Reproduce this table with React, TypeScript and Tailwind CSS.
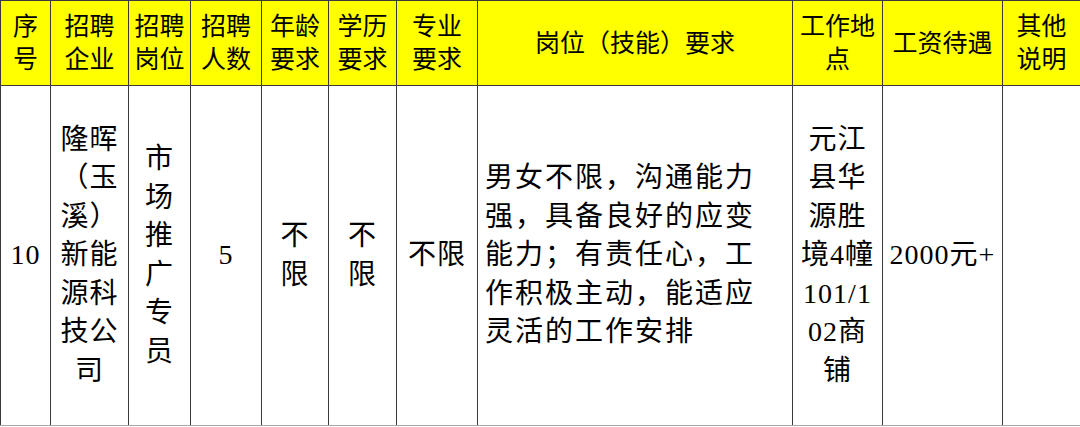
const font = {
  fontFamily: '"Liberation Serif", "Noto Sans CJK SC", serif',
};

const cols = [50, 78, 62, 71, 67, 68, 81, 315, 90, 120, 78];

const headers: string[][] = [
  ["序", "号"],
  ["招聘", "企业"],
  ["招聘", "岗位"],
  ["招聘", "人数"],
  ["年龄", "要求"],
  ["学历", "要求"],
  ["专业", "要求"],
  ["岗位（技能）要求"],
  ["工作地", "点"],
  ["工资待遇"],
  ["其他", "说明"],
];

const row: { lines: string[]; align?: "left" }[] = [
  { lines: ["10"] },
  { lines: ["隆晖", "（玉", "溪）", "新能", "源科", "技公", "司"] },
  { lines: ["市", "场", "推", "广", "专", "员"] },
  { lines: ["5"] },
  { lines: ["不", "限"] },
  { lines: ["不", "限"] },
  { lines: ["不限"] },
  {
    lines: [
      "男女不限，沟通能力",
      "强，具备良好的应变",
      "能力；有责任心，工",
      "作积极主动，能适应",
      "灵活的工作安排",
    ],
    align: "left",
  },
  { lines: ["元江", "县华", "源胜", "境4幢", "101/1", "02商", "铺"] },
  { lines: ["2000元+"] },
  { lines: [] },
];

export default function App() {
  return (
    <div className="h-[427px] w-[1080px] overflow-hidden bg-white text-black" style={font}>
      <table className="w-[1080px] table-fixed border-collapse">
        <colgroup>
          {cols.map((w, i) => (
            <col key={i} style={{ width: w }} />
          ))}
        </colgroup>
        <thead>
          <tr className="h-[85px] bg-[#ffff00]">
            {headers.map((h, i) => (
              <th
                key={i}
                className="border-[1.5px] border-[#3a3a3a] p-0 text-center align-middle text-[25px] font-normal leading-[33px]"
              >
                {h.map((l, j) => (
                  <div key={j}>{l}</div>
                ))}
              </th>
            ))}
          </tr>
        </thead>
        <tbody>
          <tr className="h-[340px]">
            {row.map((c, i) => (
              <td
                key={i}
                className={
                  c.align === "left"
                    ? "border-[1.5px] border-b-[#a8a8a8] border-[#3a3a3a] p-0 pl-[7px] text-left align-middle text-[28px] leading-[38.5px] tracking-[2px]"
                    : "border-[1.5px] border-b-[#a8a8a8] border-[#3a3a3a] p-0 text-center align-middle text-[28px] leading-[38.5px] tracking-[1px]"
                }
              >
                {c.lines.map((l, j) => (
                  <div key={j} className="whitespace-nowrap">
                    {l}
                  </div>
                ))}
              </td>
            ))}
          </tr>
        </tbody>
      </table>
    </div>
  );
}
